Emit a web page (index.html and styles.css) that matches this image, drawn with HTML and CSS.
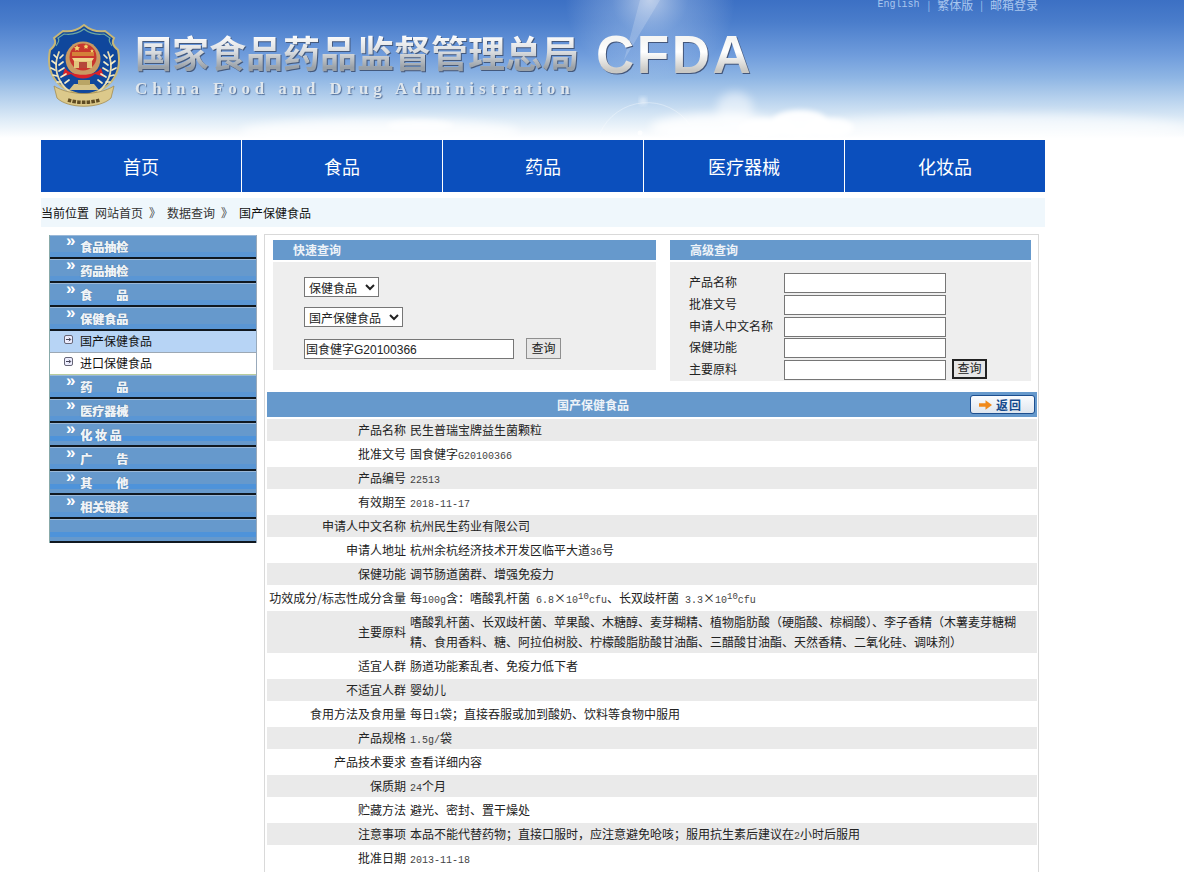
FILE: index.html
```html
<!DOCTYPE html>
<html lang="zh-CN">
<head>
<meta charset="utf-8">
<title>国家食品药品监督管理总局</title>
<link rel="stylesheet" href="styles.css">
</head>
<body>
<header class="masthead">
  <svg class="sky" viewBox="0 0 1184 140" width="1184" height="140" aria-hidden="true">
    <defs>
      <radialGradient id="sun"><stop offset="0" stop-color="#fff" stop-opacity=".6"/><stop offset=".45" stop-color="#dcebfb" stop-opacity=".25"/><stop offset="1" stop-color="#fff" stop-opacity="0"/></radialGradient>
      <filter id="soft" x="-20%" y="-50%" width="140%" height="200%"><feGaussianBlur stdDeviation="5"/></filter>
      <filter id="softer" x="-20%" y="-50%" width="140%" height="200%"><feGaussianBlur stdDeviation="2.5"/></filter>
    </defs>
    <ellipse cx="650" cy="0" rx="85" ry="80" fill="url(#sun)"/>
    <path d="M624 60 L640 0 L660 0Z" fill="#fff" opacity=".18"/>
    <path d="M600 133 A52 52 0 0 1 690 125" fill="none" stroke="#fff" stroke-opacity=".35"/>
    <circle cx="643" cy="101" r="3" fill="#fff" opacity=".8" filter="url(#softer)"/>
    <circle cx="640" cy="133" r="2.5" fill="#fff" opacity=".7"/>
    <g fill="#fff" filter="url(#soft)">
      <ellipse cx="380" cy="132" rx="140" ry="13" opacity=".75"/>
      <ellipse cx="720" cy="128" rx="70" ry="14" opacity=".85"/>
      <ellipse cx="735" cy="108" rx="18" ry="16" opacity=".5"/>
      <ellipse cx="1000" cy="128" rx="190" ry="14" opacity=".55"/>
    </g>
    <g fill="#fff" filter="url(#softer)">
      <ellipse cx="800" cy="124" rx="30" ry="14" opacity=".95"/>
      <ellipse cx="830" cy="128" rx="24" ry="10" opacity=".9"/>
      <ellipse cx="765" cy="128" rx="28" ry="9" opacity=".9"/>
      <ellipse cx="420" cy="126" rx="34" ry="6" opacity=".7"/>
    </g>
  </svg>
  <div class="topline">
    <a class="toplink toplink-en">English</a><span class="topsep topsep-first">|</span><a class="toplink">繁体版</a><span class="topsep">|</span><a class="toplink">邮箱登录</a>
  </div>
  <div class="brand">
    <svg class="emblem" viewBox="0 0 72 84" width="72" height="84" aria-hidden="true">
      <path d="M36 1 C42 6 50 8 57 7 L66 14 C64 18 64 21 70 26 C72 36 71 46 66 54 C60 64 50 68 36 72 C22 68 12 64 6 54 C1 46 0 36 2 26 C8 21 8 18 6 14 L15 7 C22 8 30 6 36 1Z" fill="#10479c" stroke="#c7b777" stroke-width="2"/>
      <path d="M8 22 C11 18 11 15 10 14 L16 10 C24 11 31 9 36 5 C41 9 48 11 56 10 L62 14 C61 15 61 18 64 22" fill="none" stroke="#6fa8a0" stroke-width="1.200"/>
      <circle cx="35" cy="35" r="17.500" fill="#c99a62"/>
      <circle cx="35" cy="33" r="13.500" fill="#c8372e"/>
      <path d="M24 28h22v4H24z" fill="#d9a13f" opacity=".7"/>
      <path d="M26 36h18v8H26z" fill="#e2c67c"/>
      <path d="M24 34h22l-2 3H26z" fill="#f0d68c"/>
      <path d="M31 38h8v6h-8z" fill="#b5483a"/>
      <path d="M29 21l1 2 2 .3-1.500 1.400.4 2-1.900-1-1.900 1 .4-2-1.500-1.400 2-.3zM38 20l.8 1.600 1.700.2-1.200 1.200.3 1.700-1.600-.8-1.600.8.300-1.700-1.200-1.200 1.700-.2zM44 25l.6 1.200 1.300.2-1 .9.300 1.300-1.200-.6-1.200.6.300-1.300-1-.9 1.300-.2z" fill="#f4d46e"/>
      <path d="M17 44 C22 53 48 53 53 44 L56 53 L47 50 C40 56 30 56 23 50 L14 53Z" fill="#d8232a"/>
      <g fill="none" stroke="#e9dcae" stroke-width="1.800" stroke-linecap="round">
        <path d="M11 28 C5 42 8 58 22 68"/>
        <path d="M60 28 C66 42 63 58 50 68"/>
      </g>
      <g stroke="#f4ecc8" stroke-width="1.700" stroke-linecap="round">
        <path d="M9 34l-3-3M8 40l-4-3M7 46l-4-2M9 52l-4-1M13 58l-4 0M12 34l3-3M11 41l4-3M11 47l5-3M13 53l5-3M17 59l4-3"/>
        <path d="M62 34l3-3M63 40l4-3M64 46l4-2M62 52l4-1M58 58l4 0M59 34l-3-3M60 41l-4-3M60 47l-5-3M58 53l-5-3M54 59l-4-3"/>
      </g>
      <path d="M26 60h20l5 6H21z" fill="#d6c48a"/>
      <path d="M30 56h12v5H30z" fill="#b9a566"/>
      <path d="M6 62 C22 72 50 72 66 62 L63 74 C52 85 20 85 9 74Z" fill="#dcc98b" stroke="#a68d4e" stroke-width=".8"/>
      <path d="M20 76 C29 79 43 79 52 76" fill="none" stroke="#5e4a22" stroke-width="3.500" stroke-dasharray="3.500 1.200"/>
    </svg>
    <div class="brand-names">
      <div class="brand-cn">国家食品药品监督管理总局</div>
      <div class="brand-en">China Food and Drug Administration</div>
    </div>
    <div class="brand-mark">CFDA</div>
  </div>
</header>

<div class="wrap">
  <nav class="mainnav">
    <a class="mainnav-item">首页</a>
    <a class="mainnav-item">食品</a>
    <a class="mainnav-item">药品</a>
    <a class="mainnav-item">医疗器械</a>
    <a class="mainnav-item">化妆品</a>
  </nav>

  <div class="crumbs">
    <span>当前位置</span><a class="crumb-link">网站首页</a><span class="crumb-sep">》</span><a class="crumb-link">数据查询</a><span class="crumb-sep">》</span><span>国产保健食品</span>
  </div>

  <div class="main">
    <aside class="side">
      <div class="side-head"><i>»</i>食品抽检</div>
      <div class="side-head"><i>»</i>药品抽检</div>
      <div class="side-head"><i>»</i>食　　品</div>
      <div class="side-head"><i>»</i>保健食品</div>
      <a class="side-sub side-sub-on"><svg class="side-ico" viewBox="0 0 9 9" width="9" height="9" aria-hidden="true"><rect x=".5" y=".5" width="8" height="8" rx="1.500" fill="#eef" stroke="#667"/><path d="M2 4.500h4.500M5 2.800l1.700 1.700L5 6.200" fill="none" stroke="#445"/></svg>国产保健食品</a>
      <a class="side-sub"><svg class="side-ico" viewBox="0 0 9 9" width="9" height="9" aria-hidden="true"><rect x=".5" y=".5" width="8" height="8" rx="1.500" fill="#eef" stroke="#667"/><path d="M2 4.500h4.500M5 2.800l1.700 1.700L5 6.200" fill="none" stroke="#445"/></svg>进口保健食品</a>
      <div class="side-head"><i>»</i>药　　品</div>
      <div class="side-head"><i>»</i>医疗器械</div>
      <div class="side-head side-band"><i>»</i>化 妆 品</div>
      <div class="side-head"><i>»</i>广　　告</div>
      <div class="side-head side-band"><i>»</i>其　　他</div>
      <div class="side-head"><i>»</i>相关链接</div>
      <div class="side-head side-band"></div>
    </aside>

    <section class="content">
      <div class="panels">
        <form class="panel panel-quick">
          <h3 class="panel-title">快速查询</h3>
          <div class="panel-body quick-body">
            <select class="sel sel-a"><option>保健食品</option></select>
            <select class="sel sel-b"><option>国产保健食品</option></select>
            <div class="quick-row">
              <input class="field field-wide" type="text" value="国食健字G20100366">
              <button class="btn" type="button">查询</button>
            </div>
          </div>
        </form>
        <form class="panel panel-adv">
          <h3 class="panel-title">高级查询</h3>
          <div class="panel-body adv-body">
            <label class="adv-label">产品名称</label><input class="field" type="text"><span></span>
            <label class="adv-label">批准文号</label><input class="field" type="text"><span></span>
            <label class="adv-label">申请人中文名称</label><input class="field" type="text"><span></span>
            <label class="adv-label">保健功能</label><input class="field" type="text"><span></span>
            <label class="adv-label">主要原料</label><input class="field" type="text"><button class="btn btn-default" type="button">查询</button>
          </div>
        </form>
      </div>

      <div class="detail-bar">
        <span class="detail-title">国产保健食品</span>
        <a class="back"><svg viewBox="0 0 14 10" width="13" height="10" aria-hidden="true"><path d="M0 3h7V0l7 5-7 5V7H0z" fill="#f08a1c"/></svg><b>返回</b></a>
      </div>

      <table class="detail">
        <tr><th>产品名称</th><td>民生普瑞宝牌益生菌颗粒</td></tr>
        <tr><th>批准文号</th><td>国食健字<span class="lt">G20100366</span></td></tr>
        <tr><th>产品编号</th><td><span class="lt">22513</span></td></tr>
        <tr><th>有效期至</th><td><span class="lt">2018-11-17</span></td></tr>
        <tr><th>申请人中文名称</th><td>杭州民生药业有限公司</td></tr>
        <tr><th>申请人地址</th><td>杭州余杭经济技术开发区临平大道<span class="lt">36</span>号</td></tr>
        <tr><th>保健功能</th><td>调节肠道菌群、增强免疫力</td></tr>
        <tr><th>功效成分/标志性成分含量</th><td>每<span class="lt">100g</span>含：嗜酸乳杆菌<span class="lt gap"> 6.8</span>×<span class="lt">10<sup>10</sup>cfu</span>、长双歧杆菌<span class="lt gap"> 3.3</span>×<span class="lt">10<sup>10</sup>cfu</span></td></tr>
        <tr class="tall"><th>主要原料</th><td>嗜酸乳杆菌、长双歧杆菌、苹果酸、木糖醇、麦芽糊精、植物脂肪酸（硬脂酸、棕榈酸）、李子香精（木薯麦芽糖糊精、食用香料、糖、阿拉伯树胶、柠檬酸脂肪酸甘油酯、三醋酸甘油酯、天然香精、二氧化硅、调味剂）</td></tr>
        <tr><th>适宜人群</th><td>肠道功能紊乱者、免疫力低下者</td></tr>
        <tr><th>不适宜人群</th><td>婴幼儿</td></tr>
        <tr><th>食用方法及食用量</th><td>每日<span class="lt">1</span>袋；直接吞服或加到酸奶、饮料等食物中服用</td></tr>
        <tr><th>产品规格</th><td><span class="lt">1.5g/</span>袋</td></tr>
        <tr><th>产品技术要求</th><td>查看详细内容</td></tr>
        <tr><th>保质期</th><td><span class="lt">24</span>个月</td></tr>
        <tr><th>贮藏方法</th><td>避光、密封、置干燥处</td></tr>
        <tr><th>注意事项</th><td>本品不能代替药物；直接口服时，应注意避免呛咳；服用抗生素后建议在<span class="lt">2</span>小时后服用</td></tr>
        <tr><th>批准日期</th><td><span class="lt">2013-11-18</span></td></tr>
      </table>
    </section>
  </div>
</div>
</body>
</html>
```

FILE: styles.css
```css
* { box-sizing: border-box; }
html, body { margin: 0; padding: 0; }
body {
  width: 1184px;
  background: #fff;
  color: #222;
  font: 12px/20px "Noto Sans CJK SC", "Liberation Sans", sans-serif;
}

/* masthead */
.masthead {
  position: relative;
  height: 140px;
  overflow: hidden;
  background: linear-gradient(#3c70c4 0, #4a7dcb 22px, #6f9cdc 55px, #8fb6e4 78px, #b9d3ee 100px, #dfecf7 120px, #fff 138px);
}
.sky { position: absolute; left: 0; top: 0; }
.topline {
  position: relative;
  width: 1038px;
  height: 10px;
  display: flex;
  justify-content: flex-end;
  align-items: center;
  color: #a9c6ee;
  line-height: 10px;
}
.toplink { color: #a9c6ee; }
.toplink-en { font: 10px/10px "Liberation Mono", monospace; }
.topsep { margin: 0 7px; font-size: 10px; }
.topsep-first { margin-left: 8px; }
.brand {
  position: relative;
  display: flex;
  align-items: flex-start;
  padding: 14px 0 0 48px;
}
.emblem { flex: none; }
.brand-names { margin: 6px 0 0 15px; }
.brand-cn {
  font-size: 37px;
  line-height: 44px;
  font-weight: 700;
  white-space: nowrap;
  color: transparent;
  background: linear-gradient(#fbfbfb 15%, #d9dcdf 50%, #9aa1a8 85%);
  -webkit-background-clip: text;
  background-clip: text;
  filter: drop-shadow(1px 1px 0 #44597c);
}
.brand-en {
  margin-top: 5px;
  font: 700 17px/20px "Liberation Serif", serif;
  letter-spacing: 4.87px;
  white-space: nowrap;
  color: #dfe6ec;
  text-shadow: 1px 1px 1px #54709a;
}
.brand-mark {
  margin: 0 0 0 17px;
  font: 700 53px/62px "Liberation Sans", sans-serif;
  letter-spacing: 2.5px;
  color: transparent;
  background: linear-gradient(#f6f6f4 25%, #fff 45%, #c9c8c4 75%);
  -webkit-background-clip: text;
  background-clip: text;
  filter: drop-shadow(1px 1px 0 #43567a);
}

/* shell */
.wrap { width: 1004px; margin-left: 41px; }
.mainnav { display: flex; height: 52px; background: #0b4fbd; }
.mainnav-item {
  flex: 1 1 0;
  text-align: center;
  color: #fff;
  font-size: 18px;
  line-height: 52px;
  border-left: 1px solid #fff;
}
.mainnav-item:first-child { border-left: 0; }
.crumbs {
  display: flex;
  height: 29px;
  margin-top: 6px;
  align-items: center;
  background: #eff7fc;
  color: #111;
}
.crumb-link { margin-left: 6px; color: #333; }
.crumb-sep { margin: 0 0 0 6px; color: #444; }
.crumb-sep + span { margin-left: 6px; }

.main { display: flex; align-items: flex-start; padding-left: 8px; margin-top: 7px; gap: 7px; }

/* side menu */
.side { flex: none; width: 208px; margin-top: 1px; border-left: 1px solid #8aa; border-right: 1px solid #9ab; }
.side-head {
  position: relative;
  height: 24px;
  padding: 2px 0 0 30px;
  color: #eef3f8;
  font-weight: 700;
  line-height: 20px;
  white-space: pre;
  text-shadow: .4px 0 0 #eef3f8, 0 0 1px #345;
  border-bottom: 2px solid #101820;
  background: linear-gradient(#9ab8d8 0 1px, #6699cc 1px 17px, #5a96d4 17px);
}
.side-band { background: linear-gradient(#9ab8d8 0 1px, #6699cc 1px 13px, #4e93da 13px 18px, #6699cc 18px); }
.side-head i {
  position: absolute;
  left: 16px;
  top: -2px;
  font: 700 17px/16px "Liberation Sans", sans-serif;
  color: #fff;
  text-shadow: none;
}
.side-sub {
  display: flex;
  height: 22px;
  align-items: center;
  padding: 0 0 2px 14px;
  color: #111;
  background: #fff;
  border-bottom: 1px solid #b8cc9c;
}
.side-sub-on { background: #b7d4f5; border-bottom: 1px solid #9ca8b4; }
.side-ico { flex: none; margin: -2px 7px 0 0; }

/* content box */
.content {
  flex: none;
  width: 775px;
  height: 638px;
  padding: 5px 1px 0 2px;
  border: 1px solid #d9d9d9;
  border-bottom: 0;
}
.panels { display: flex; align-items: flex-start; gap: 14px; padding-left: 6px; height: 141px; }
.panel { margin: 0; }
.panel-quick { width: 383px; }
.panel-adv { width: 361px; }
.panel-title {
  margin: 0 0 2px;
  height: 20px;
  padding-left: 20px;
  background: #6699cc;
  color: #eef3f8;
  font-size: 12px;
  line-height: 20px;
  font-weight: 700;
}
.panel-body { background: #eeeeee; }
.quick-body { height: 108px; padding: 15px 0 0 31px; display: flex; flex-direction: column; align-items: flex-start; }
.sel {
  height: 20px;
  padding: 0 0 2px 0;
  border: 1px solid #767676;
  border-radius: 0;
  background-color: #fff;
  color: #222;
  font: 12px/16px "Noto Sans CJK SC", sans-serif;
}
.sel-a { width: 75px; }
.sel-b { width: 99px; margin-top: 10px; }
.quick-row { display: flex; align-items: center; gap: 12px; margin-top: 11px; }
.field {
  display: block;
  width: 162px;
  height: 20px;
  padding: 0 1px;
  border: 1px solid #767676;
  background: #fff;
  color: #222;
  font: 12px/18px "Liberation Sans", "Noto Sans CJK SC", sans-serif;
}
.field-wide { width: 210px; }
.btn {
  width: 35px;
  height: 21px;
  padding: 0 0 2px;
  border: 1px solid #8f8f8f;
  background: #e6e6e6;
  color: #222;
  font: 12px/16px "Noto Sans CJK SC", sans-serif;
}
.btn-default { border: 2px solid #222; height: 20px; line-height: 14px; }
.adv-body {
  height: 119px;
  padding: 11px 0 0 19px;
  display: grid;
  grid-template-columns: 95px 162px 35px;
  grid-auto-rows: 20px;
  row-gap: 1.75px;
  column-gap: 0;
  align-items: center;
}
.adv-label { color: #222; white-space: nowrap; padding-bottom: 2px; }
.adv-body .btn-default { margin: -2px 0 0 6px; width: 35px; }

/* detail */
.detail-bar {
  display: flex;
  height: 25px;
  margin-top: 11px;
  align-items: center;
  justify-content: space-between;
  padding: 0 2px 0 290px;
  background: #6699cc;
}
.detail-title { color: #eef3f8; font-weight: 700; }
.back {
  display: flex;
  width: 65px;
  height: 19px;
  align-items: center;
  gap: 4px;
  padding-left: 8px;
  border: 1px solid #1d4f8f;
  border-radius: 3px;
  background: linear-gradient(#fafcff, #dfe6ee);
}
.back b { color: #164a8c; letter-spacing: 1px; line-height: 16px; }
.detail {
  width: 770px;
  table-layout: fixed;
  border-collapse: separate;
  border-spacing: 0;
  margin-top: 1px;
}
.detail tr { height: 24px; }
.detail tr.tall { height: 44px; }
.detail th, .detail td {
  padding: 0;
  font-weight: 400;
  line-height: 20px;
  color: #222;
  border-top: 1px solid #fff;
  border-bottom: 1px solid #fff;
}
.detail th { width: 139px; text-align: right; white-space: nowrap; }
.detail td { padding: 0 10px 0 4px; }
.detail tr:nth-child(odd) th, .detail tr:nth-child(odd) td { background: #eaeaea; }
.lt { font: 10px/1 "Liberation Mono", monospace; color: #444; }
.lt sup { font-size: 9px; line-height: 0; }
.gap { white-space: pre; }
```
